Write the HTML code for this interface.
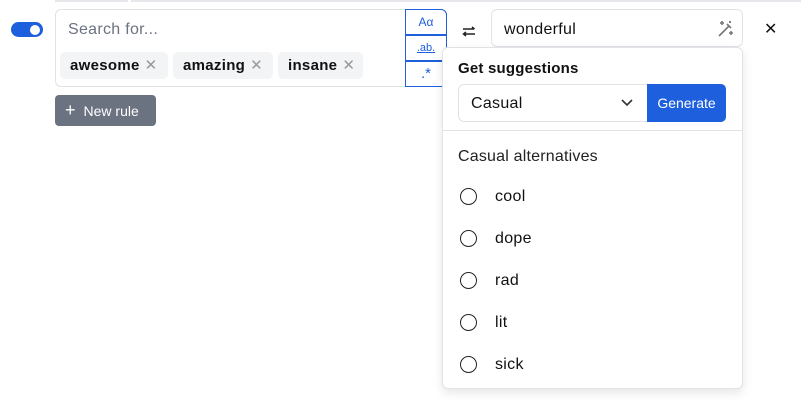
<!DOCTYPE html>
<html><head><style>
*{box-sizing:border-box;margin:0;padding:0}
body{width:801px;height:409px;background:#fff;font-family:"Liberation Sans",sans-serif;position:relative;overflow:hidden;color:#111}
.a{position:absolute}
.chip{position:absolute;top:52px;height:27px;background:#f3f4f6;border-radius:5px;font-weight:bold;font-size:15px;line-height:28px;padding-left:10px;letter-spacing:.3px}
.chip span{color:#999;font-weight:normal;margin-left:5px;font-size:15px}
.cell{position:absolute;left:405px;width:42px;height:26px;border:1px solid #1d5fdc;color:#1d5fdc;font-size:12px;text-align:center;line-height:24px;background:#fff}
.r{position:absolute;left:460px;width:17px;height:17px;border:1.6px solid #222;border-radius:50%}
.rl{position:absolute;left:495px;font-size:16px;line-height:20px;letter-spacing:.3px}
</style></head><body>
<div class="a" style="left:55px;top:0;width:746px;height:2px;background:#e5e7eb"></div>
<div class="a" style="left:128px;top:0;width:3px;height:2px;background:#fff"></div>
<div class="a" style="left:11px;top:22px;width:32px;height:15px;border-radius:8px;background:#1d5fdc"></div>
<div class="a" style="left:30px;top:25px;width:10px;height:10px;border-radius:50%;background:#fff"></div>
<div class="a" style="left:55px;top:9px;width:392px;height:78px;border:1px solid #e1e3e7;border-radius:6px"></div>
<div class="a" style="left:68px;top:20px;font-size:16px;color:#6b7280;line-height:20px;letter-spacing:.3px">Search for...</div>
<div class="chip" style="left:60px;width:108px">awesome<span>✕</span></div>
<div class="chip" style="left:173px;width:100px">amazing<span>✕</span></div>
<div class="chip" style="left:278px;width:85px">insane<span>✕</span></div>
<div class="cell" style="top:9px;border-top-right-radius:6px">Aα</div>
<div class="cell" style="top:35px;font-size:11px"><u>.ab.</u></div>
<div class="cell" style="top:61px;font-size:15px">.*</div>
<div class="a" style="left:55px;top:95px;width:101px;height:31px;background:#6b7280;border-radius:4px;color:#fff;font-size:14px;line-height:31px;padding-left:10px"><span style="font-size:18px;margin-right:8px">+</span>New rule</div>
<svg class="a" style="left:462px;top:26px" width="14" height="11" viewBox="0 0 14 11" fill="none" stroke="#222" stroke-width="1.5"><path d="M1 3h11M10 1l2.5 2M13 8H2M4 6L1.5 8 4 10"/></svg>
<div class="a" style="left:491px;top:9px;width:252px;height:38px;border:1px solid #e1e3e7;border-radius:6px"></div>
<div class="a" style="left:504px;top:20px;font-size:16px;line-height:20px;letter-spacing:.3px">wonderful</div>
<svg class="a" style="left:717px;top:20px" width="18" height="18" viewBox="0 0 18 18" fill="none" stroke="#777" stroke-width="1.6"><path d="M2 16L12 6M10 4l4 4"/><path d="M5 1v4M3 3h4M14 11v4M12 13h4M13 1v2M12 2h2"/></svg>
<div class="a" style="left:764px;top:19px;font-size:16px">✕</div>
<div class="a" style="left:442px;top:47px;width:301px;height:342px;border:1px solid #e1e3e7;border-radius:6px;background:#fff;box-shadow:0 4px 10px rgba(0,0,0,.1)"></div>
<div class="a" style="left:458px;top:59px;font-size:15px;font-weight:bold;line-height:20px;letter-spacing:.2px">Get suggestions</div>
<div class="a" style="left:458px;top:84px;width:192px;height:38px;border:1px solid #e1e3e7;border-radius:6px 0 0 6px"></div>
<div class="a" style="left:471px;top:94px;font-size:16px;line-height:20px;letter-spacing:.3px">Casual</div>
<svg class="a" style="left:620px;top:98px" width="14" height="9" viewBox="0 0 14 9" fill="none" stroke="#333" stroke-width="1.6"><path d="M2 2l5 5 5-5"/></svg>
<div class="a" style="left:647px;top:84px;width:79px;height:38px;background:#1d5fdc;border-radius:0 5px 5px 0;color:#fff;font-size:14px;line-height:39px;text-align:center">Generate</div>
<div class="a" style="left:443px;top:130px;width:299px;height:1px;background:#e1e3e7"></div>
<div class="a" style="left:458px;top:147px;font-size:16px;line-height:20px;color:#222;letter-spacing:.2px">Casual alternatives</div>
<div class="r" style="top:188px"></div><div class="rl" style="top:187px">cool</div>
<div class="r" style="top:230px"></div><div class="rl" style="top:229px">dope</div>
<div class="r" style="top:272px"></div><div class="rl" style="top:271px">rad</div>
<div class="r" style="top:314px"></div><div class="rl" style="top:313px">lit</div>
<div class="r" style="top:356px"></div><div class="rl" style="top:355px">sick</div>
</body></html>
